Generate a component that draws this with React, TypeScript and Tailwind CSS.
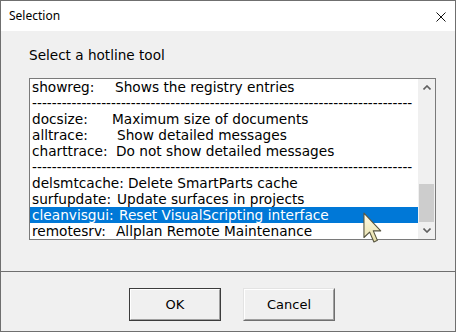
import React from "react";

const rows: { cmd?: string; w?: number; desc?: string; sep?: boolean; sel?: boolean }[] = [
  { cmd: "showreg:", w: 83, desc: "Shows the registry entries" },
  { sep: true },
  { cmd: "docsize:", w: 80, desc: "Maximum size of documents" },
  { cmd: "alltrace:", w: 85, desc: "Show detailed messages" },
  { cmd: "charttrace:", w: 84, desc: "Do not show detailed messages" },
  { sep: true },
  { cmd: "delsmtcache:", w: 96, desc: "Delete SmartParts cache" },
  { cmd: "surfupdate:", w: 85, desc: "Update surfaces in projects" },
  { cmd: "cleanvisgui:", w: 87, desc: "Reset VisualScripting interface", sel: true },
  { cmd: "remotesrv:", w: 84, desc: "Allplan Remote Maintenance" },
];

const dashes = "-".repeat(77);

export default function App() {
  return (
    <div
      className="relative w-[456px] h-[332px] bg-[#f0f0f0] border border-[#6f6f6f] flex flex-col overflow-hidden"
      style={{ fontFamily: '"DejaVu Sans", Verdana, sans-serif' }}
    >
      {/* title bar */}
      <div className="h-[30px] bg-white flex items-center justify-between pl-[8px] pr-[9px] shrink-0">
        <span
          className="text-[12px] text-black leading-none"
          style={{ fontFamily: '"Noto Sans", "Segoe UI", sans-serif' }}
        >
          Selection
        </span>
        <svg width="10" height="10" viewBox="0 0 10 10" className="mt-[1px]">
          <path d="M0.5 0.5 L9.5 9.5 M9.5 0.5 L0.5 9.5" stroke="#111" strokeWidth="1" />
        </svg>
      </div>

      {/* content */}
      <div className="h-[240px] shrink-0 pt-[16px] pl-[28px]">
        <div className="text-[13.6px] leading-[16px] text-black">Select a hotline tool</div>
        <div className="mt-[15px] w-[407px] h-[162px] border border-[#7a7a7a] bg-white flex">
          <div className="w-[388px] h-[160px] overflow-hidden">
            {rows.map((r, i) =>
              r.sep ? (
                <div
                  key={i}
                  className="h-[16px] leading-[16px] text-[13.7px] text-black whitespace-nowrap pl-[2px]"
                >
                  {dashes}
                </div>
              ) : (
                <div
                  key={i}
                  className={
                    "h-[16px] leading-[16px] text-[13.7px] whitespace-nowrap pl-[2px] " +
                    (r.sel ? "bg-[#0078d7] text-white" : "text-black")
                  }
                >
                  <span className="inline-block" style={{ width: r.w }}>
                    {r.cmd}
                  </span>
                  <span>{r.desc}</span>
                </div>
              )
            )}
          </div>
          {/* scrollbar */}
          <div className="w-[17px] h-[160px] bg-[#f0f0f0] flex flex-col">
            <div className="h-[17px] flex items-center justify-center">
              <svg width="8" height="5" viewBox="0 0 8 5">
                <path d="M0.5 4.5 L4 1 L7.5 4.5" stroke="#606060" strokeWidth="1.6" fill="none" />
              </svg>
            </div>
            <div className="flex-1 flex flex-col justify-end px-[1px]">
              <div className="h-[38px] bg-[#cdcdcd]" />
            </div>
            <div className="h-[17px] flex items-center justify-center">
              <svg width="8" height="5" viewBox="0 0 8 5">
                <path d="M0.5 0.5 L4 4 L7.5 0.5" stroke="#606060" strokeWidth="1.6" fill="none" />
              </svg>
            </div>
          </div>
        </div>
      </div>

      {/* bottom panel */}
      <div className="flex-1 border-t border-[#6f6f6f] pt-[16px] pl-[128px] flex gap-[22px]">
        <button className="w-[92px] h-[33px] border border-[#3c3c3c] bg-[#f0f0f0] flex">
          <div className="flex-1 border-t border-l border-white border-r border-b border-r-[#a0a0a0] border-b-[#a0a0a0] flex items-center justify-center text-[13px] text-black">
            OK
          </div>
        </button>
        <button className="w-[92px] h-[33px] border border-t-[#e3e3e3] border-l-[#e3e3e3] border-r-[#6f6f6f] border-b-[#6f6f6f] bg-[#f0f0f0] flex">
          <div className="flex-1 border-t border-l border-white border-r border-b border-r-[#a0a0a0] border-b-[#a0a0a0] flex items-center justify-center text-[13px] text-black">
            Cancel
          </div>
        </button>
      </div>

      {/* mouse cursor */}
      <svg
        className="absolute left-[362px] top-[211px]"
        width="19"
        height="32"
        viewBox="0 0 12 20"
      >
        <defs>
          <linearGradient id="cg" x1="0" y1="0" x2="0" y2="1">
            <stop offset="0" stopColor="#fffbe6" />
            <stop offset="1" stopColor="#e7dfa8" />
          </linearGradient>
        </defs>
        <path
          d="M0.6 0.6 L0.6 16 L4.2 12.6 L6.9 18.8 L9.1 17.8 L6.5 11.8 L11.2 11.8 Z"
          fill="url(#cg)"
          stroke="#55533f"
          strokeWidth="0.7"
          strokeLinejoin="round"
        />
      </svg>
    </div>
  );
}
